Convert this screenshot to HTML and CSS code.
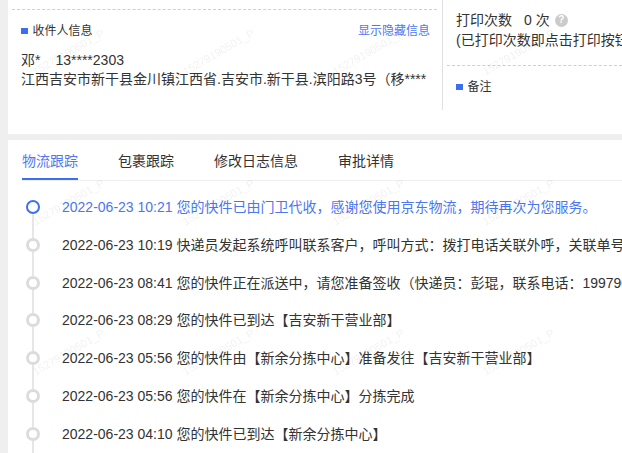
FILE: index.html
```html
<!DOCTYPE html>
<html lang="zh-CN">
<head>
<meta charset="utf-8">
<title>物流跟踪</title>
<link rel="stylesheet" href="styles.css">
</head>
<body>
<div class="main">
  <div class="top-panel">
    <div class="recv">
      <div class="recv-section">
        <div class="recv-head">
          <span class="title"><i class="sq"></i>收件人信息</span>
          <span class="link">显示隐藏信息</span>
        </div>
        <div class="line name-line"><span>邓*</span><span class="phone">13****2303</span></div>
        <div class="line">江西吉安市新干县金川镇江西省.吉安市.新干县.滨阳路3号（移****</div>
      </div>
    </div>
    <div class="print">
      <div class="print-info">
        <div class="pline">打印次数<span class="count">0 次</span><span class="qmark">?</span></div>
        <div class="pline">(已打印次数即点击打印按钮的次数)</div>
      </div>
      <div class="remark"><span class="title"><i class="sq"></i>备注</span></div>
    </div>
  </div>

  <div class="bottom-panel">
    <div class="tabs">
      <span class="tab active">物流跟踪</span>
      <span class="tab">包裹跟踪</span>
      <span class="tab">修改日志信息</span>
      <span class="tab">审批详情</span>
    </div>
    <ul class="timeline">
      <li class="item first"><span class="axis"><i class="dot"></i></span><span class="txt">2022-06-23 10:21 您的快件已由门卫代收，感谢您使用京东物流，期待再次为您服务。</span></li>
      <li class="item"><span class="axis"><i class="dot"></i></span><span class="txt">2022-06-23 10:19 快递员发起系统呼叫联系客户，呼叫方式：拨打电话关联外呼，关联单号：JDVA12345678901</span></li>
      <li class="item"><span class="axis"><i class="dot"></i></span><span class="txt">2022-06-23 08:41 您的快件正在派送中，请您准备签收（快递员：彭琨，联系电话：19979012345）</span></li>
      <li class="item"><span class="axis"><i class="dot"></i></span><span class="txt">2022-06-23 08:29 您的快件已到达【吉安新干营业部】</span></li>
      <li class="item"><span class="axis"><i class="dot"></i></span><span class="txt">2022-06-23 05:56 您的快件由【新余分拣中心】准备发往【吉安新干营业部】</span></li>
      <li class="item"><span class="axis"><i class="dot"></i></span><span class="txt">2022-06-23 05:56 您的快件在【新余分拣中心】分拣完成</span></li>
      <li class="item"><span class="axis"><i class="dot"></i></span><span class="txt">2022-06-23 04:10 您的快件已到达【新余分拣中心】</span></li>
      <li class="item"><span class="axis"><i class="dot"></i></span><span class="txt">2022-06-23 01:32 您的快件已发车</span></li>
    </ul>
  </div>
</div>

<div class="wm">
  <span>15279190501_P</span><span>15279190501_P</span><span>15279190501_P</span><span>15279190501_P</span>
  <span>15279190501_P</span><span>15279190501_P</span><span>15279190501_P</span><span>15279190501_P</span>
  <span>15279190501_P</span><span>15279190501_P</span><span>15279190501_P</span><span>15279190501_P</span>
  <span>15279190501_P</span><span>15279190501_P</span><span>15279190501_P</span><span>15279190501_P</span>
</div>
</body>
</html>
```

FILE: styles.css
```css
html, body {
  margin: 0;
  padding: 0;
  overflow: hidden;
  height: 100%;
}
body {
  background: #efefef;
  font-family: "Liberation Sans", "Noto Sans CJK SC", sans-serif;
  color: #333;
  font-size: 14px;
}
.main {
  margin-left: 8px;
  display: flex;
  flex-direction: column;
  gap: 6px;
}
.top-panel {
  background: #fff;
  height: 134px;
  display: flex;
  align-items: flex-start;
}
.recv {
  width: 434px;
  height: 110px;
  box-sizing: border-box;
  padding: 9px 5px 0 4px;
}
.recv-section {
  border-top: 1px dashed #cfcfcf;
  padding: 12px 7px 0 9px;
}
.recv-head {
  display: flex;
  justify-content: space-between;
  align-items: center;
  font-size: 12px;
  line-height: 18px;
}
.title {
  display: flex;
  align-items: center;
  gap: 5px;
  font-size: 12px;
  line-height: 18px;
  color: #333;
}
.sq {
  display: inline-block;
  width: 6.5px;
  height: 6.5px;
  background: #3b6ef2;
}
.link {
  color: #4b7bf3;
}
.line {
  font-size: 14px;
  line-height: 19px;
  white-space: nowrap;
}
.name-line {
  margin-top: 10.5px;
}
.phone {
  margin-left: 15px;
}
.print {
  flex: 1;
  height: 110px;
  border-left: 1px solid #e0e0e0;
  padding-left: 4px;
  box-sizing: border-box;
  white-space: nowrap;
  overflow: hidden;
}
.print-info {
  padding: 10px 0 15px 9px;
  border-bottom: 1px dashed #cfcfcf;
}
.pline {
  line-height: 20px;
  display: flex;
  align-items: center;
}
.count {
  margin-left: 12px;
}
.qmark {
  display: inline-flex;
  align-items: center;
  justify-content: center;
  width: 13px;
  height: 13px;
  border-radius: 50%;
  background: #cbcbcb;
  color: #fff;
  font-size: 10px;
  font-weight: bold;
  margin-left: 5px;
}
.remark {
  padding: 12px 0 0 9px;
}
.bottom-panel {
  background: #fff;
  height: 320px;
  overflow: hidden;
}
.tabs {
  margin-left: 14px;
  padding-top: 10px;
  display: flex;
  gap: 40px;
  border-bottom: 1px solid #efefef;
}
.tab {
  position: relative;
  line-height: 22px;
  padding-bottom: 8px;
  font-size: 14px;
  color: #333;
}
.tab.active {
  color: #4d78f1;
}
.tab.active::after {
  content: "";
  position: absolute;
  left: 0;
  right: 0;
  bottom: 0;
  height: 2px;
  background: #3b6ef2;
}
.timeline {
  list-style: none;
  margin: 0;
  padding: 15px 0 0 18px;
}
.item {
  display: flex;
  gap: 22px;
  height: 37.8px;
  white-space: nowrap;
}
.axis {
  width: 14px;
  flex: none;
  display: flex;
  flex-direction: column;
  align-items: center;
}
.axis::before {
  content: "";
  width: 2px;
  height: 4px;
  background: #e6e6e6;
}
.first .axis::before {
  background: transparent;
}
.axis::after {
  content: "";
  width: 2px;
  flex: 1;
  background: #e6e6e6;
}
.dot {
  width: 14px;
  height: 14px;
  box-sizing: border-box;
  border-radius: 50%;
  border: 3px solid #dcdcdc;
  background: #fff;
}
.first .dot {
  border: 2.5px solid #3f6ff2;
}
.txt {
  line-height: 22px;
  font-size: 14px;
}
.first .txt {
  color: #4a76f0;
}
.wm {
  position: fixed;
  left: -7px;
  top: -23px;
  width: 600px;
  height: 600px;
  display: grid;
  grid-template-columns: repeat(4, 150px);
  grid-auto-rows: 150px;
  place-items: center;
  pointer-events: none;
  z-index: 5;
}
.wm span {
  font-size: 11px;
  color: rgba(0, 0, 0, 0.06);
  transform: rotate(-30deg);
  white-space: nowrap;
}
```
